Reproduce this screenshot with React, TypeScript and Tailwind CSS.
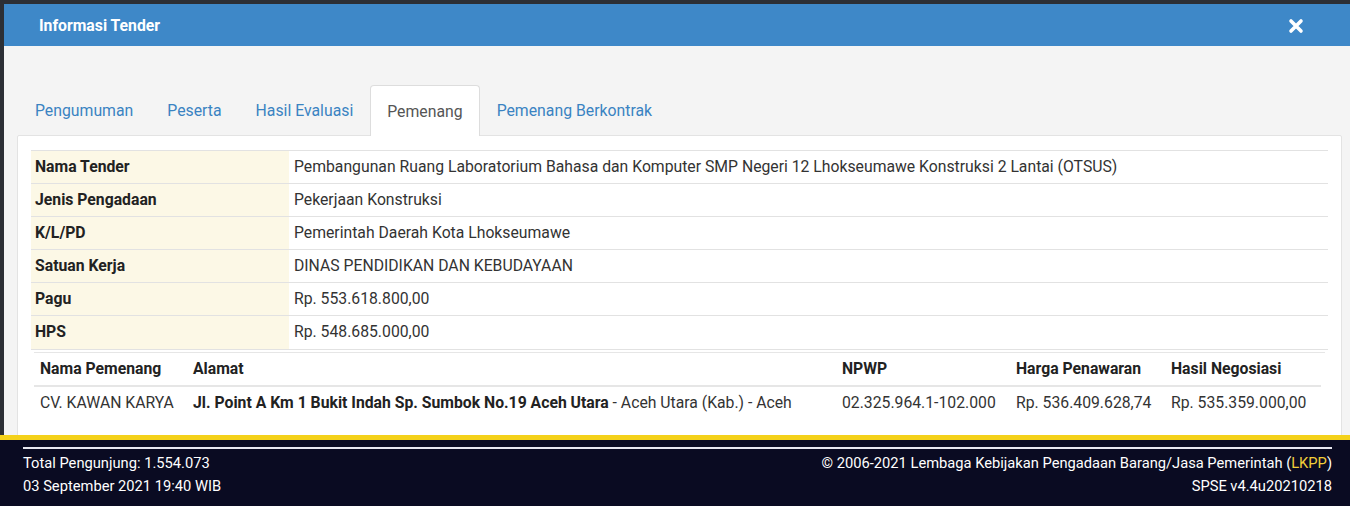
const tabs = ['Pengumuman', 'Peserta', 'Hasil Evaluasi', 'Pemenang', 'Pemenang Berkontrak']

const info: [string, string][] = [
  ['Nama Tender', 'Pembangunan Ruang Laboratorium Bahasa dan Komputer SMP Negeri 12 Lhokseumawe Konstruksi 2 Lantai (OTSUS)'],
  ['Jenis Pengadaan', 'Pekerjaan Konstruksi'],
  ['K/L/PD', 'Pemerintah Daerah Kota Lhokseumawe'],
  ['Satuan Kerja', 'DINAS PENDIDIKAN DAN KEBUDAYAAN'],
  ['Pagu', 'Rp. 553.618.800,00'],
  ['HPS', 'Rp. 548.685.000,00'],
]

function CloseIcon() {
  return (
    <svg width="16" height="16" viewBox="0 0 16 16" fill="none">
      <path d="M3 3L13 13M13 3L3 13" stroke="white" strokeWidth="3.6" strokeLinecap="round" />
    </svg>
  )
}

export default function App(): React.JSX.Element {
  return (
    <div
      className="w-[1350px] h-[506px] overflow-hidden flex flex-col bg-[#2c2f35] text-[#333]"
      style={{ fontFamily: 'Roboto, "Liberation Sans", sans-serif' }}
    >
      {/* modal */}
      <div className="flex-1 min-h-0 overflow-hidden mt-[4px] ml-[4px] bg-[#f4f4f4]">
        <div className="h-[42px] bg-[#3e88c8] flex items-center justify-between pl-[35px] pr-[46px] pt-[2px]">
          <h4 className="text-white font-bold text-[15.75px]">Informasi Tender</h4>
          <CloseIcon />
        </div>

        <div className="pl-[13px] pr-[8px] pt-[38px]">
          <ul className="flex h-[51px] pl-[1px]">
            {tabs.map((t) =>
              t === 'Pemenang' ? (
                <li
                  key={t}
                  className="px-[16px] pt-[2px] flex items-center bg-white border border-[#ddd] border-b-0 rounded-t-[4px] text-[#555] text-[15.8px] relative top-[1px]"
                >
                  {t}
                </li>
              ) : (
                <li key={t} className="px-[17px] pt-[2px] flex items-center text-[#3a83c2] text-[15.8px]">
                  {t}
                </li>
              )
            )}
          </ul>

          <div className="bg-white border border-[#e3e3e3] rounded-[2px] px-[13px] pt-[14px] pb-[20px] h-[320px]">
            <table className="w-full border-collapse text-[15.75px]">
              <tbody>
                {info.map(([k, v]) => (
                  <tr key={k} className="border-t border-[#e2e2e2] h-[33px]">
                    <th className="w-[258px] bg-[#fcf8e6] text-left font-bold pl-[4px] text-[#222]">{k}</th>
                    <td className="pl-[5px] text-[#333]">{v}</td>
                  </tr>
                ))}
              </tbody>
            </table>

            <div className="border-t border-[#e2e2e2] pt-[2px] px-[3px]">
              <div className="grid grid-cols-[153px_649px_174px_155px_156px] border-t border-[#e6e6e6] text-[15.75px]">
                <div className="h-[34px] flex items-center pl-[6px] font-bold text-[#222] border-b-2 border-[#e6e6e6]">Nama Pemenang</div>
                <div className="h-[34px] flex items-center pl-[6px] font-bold text-[#222] border-b-2 border-[#e6e6e6]">Alamat</div>
                <div className="h-[34px] flex items-center pl-[6px] font-bold text-[#222] border-b-2 border-[#e6e6e6]">NPWP</div>
                <div className="h-[34px] flex items-center pl-[6px] font-bold text-[#222] border-b-2 border-[#e6e6e6]">Harga Penawaran</div>
                <div className="h-[34px] flex items-center pl-[6px] font-bold text-[#222] border-b-2 border-[#e6e6e6]">Hasil Negosiasi</div>

                <div className="h-[33px] flex items-center pl-[6px] whitespace-nowrap">CV. KAWAN KARYA</div>
                <div className="h-[33px] flex items-center pl-[6px] whitespace-nowrap">
                  <b className="text-[#222]">Jl. Point A Km 1 Bukit Indah Sp. Sumbok No.19 Aceh Utara</b>
                  <span>&nbsp;- Aceh Utara (Kab.) - Aceh</span>
                </div>
                <div className="h-[33px] flex items-center pl-[6px]">02.325.964.1-102.000</div>
                <div className="h-[33px] flex items-center pl-[6px]">Rp. 536.409.628,74</div>
                <div className="h-[33px] flex items-center pl-[6px]">Rp. 535.359.000,00</div>
              </div>
            </div>
          </div>
        </div>
      </div>

      {/* footer */}
      <div className="h-[5px] bg-[#f4d11a]" />
      <footer className="h-[66px] bg-[#0a0b22] text-white text-[14.7px] pl-[23px] pr-[18px] pt-[7px]">
        <div className="h-[2px] bg-[#e8e8f0]" />
        <div className="flex justify-between mt-[3px] leading-[23px]">
          <div>
            <div>Total Pengunjung: 1.554.073</div>
            <div>03 September 2021 19:40 WIB</div>
          </div>
          <div className="text-right">
            <div>
              © 2006-2021 Lembaga Kebijakan Pengadaan Barang/Jasa Pemerintah (<span className="text-[#f2cf3a]">LKPP</span>)
            </div>
            <div>SPSE v4.4u20210218</div>
          </div>
        </div>
      </footer>
    </div>
  )
}
